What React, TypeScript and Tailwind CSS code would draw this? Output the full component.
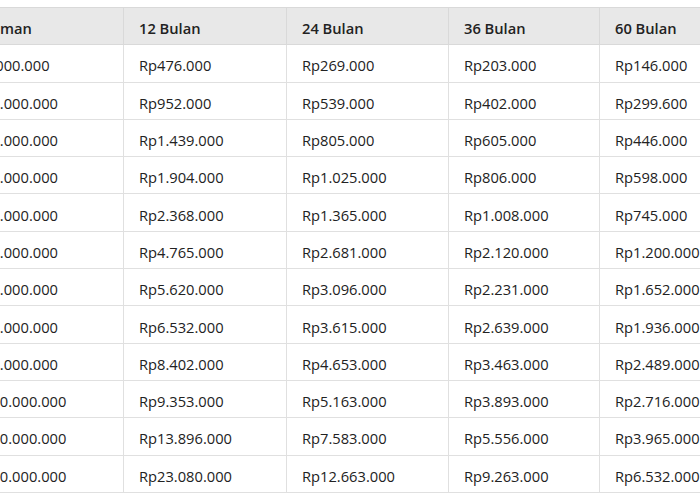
const headers = ["Pinjaman", "12 Bulan", "24 Bulan", "36 Bulan", "60 Bulan"];

const rows: string[][] = [
  ["Rp5.000.000", "Rp476.000", "Rp269.000", "Rp203.000", "Rp146.000"],
  ["Rp10.000.000", "Rp952.000", "Rp539.000", "Rp402.000", "Rp299.600"],
  ["Rp15.000.000", "Rp1.439.000", "Rp805.000", "Rp605.000", "Rp446.000"],
  ["Rp20.000.000", "Rp1.904.000", "Rp1.025.000", "Rp806.000", "Rp598.000"],
  ["Rp25.000.000", "Rp2.368.000", "Rp1.365.000", "Rp1.008.000", "Rp745.000"],
  ["Rp50.000.000", "Rp4.765.000", "Rp2.681.000", "Rp2.120.000", "Rp1.200.000"],
  ["Rp60.000.000", "Rp5.620.000", "Rp3.096.000", "Rp2.231.000", "Rp1.652.000"],
  ["Rp70.000.000", "Rp6.532.000", "Rp3.615.000", "Rp2.639.000", "Rp1.936.000"],
  ["Rp90.000.000", "Rp8.402.000", "Rp4.653.000", "Rp3.463.000", "Rp2.489.000"],
  ["Rp100.000.000", "Rp9.353.000", "Rp5.163.000", "Rp3.893.000", "Rp2.716.000"],
  ["Rp150.000.000", "Rp13.896.000", "Rp7.583.000", "Rp5.556.000", "Rp3.965.000"],
  ["Rp250.000.000", "Rp23.080.000", "Rp12.663.000", "Rp9.263.000", "Rp6.532.000"],
];

export default function App() {
  return (
    <div
      className="w-[700px] h-[500px] overflow-hidden bg-white pt-[7px]"
      style={{ fontFamily: '"Open Sans", "Liberation Sans", sans-serif' }}
    >
      <table className="table-fixed border-collapse ml-[-51px] w-[811px] text-[14.7px] text-[#222]">
        <colgroup>
          <col className="w-[174px]" />
          <col className="w-[163px]" />
          <col className="w-[162px]" />
          <col className="w-[151px]" />
          <col className="w-[161px]" />
        </colgroup>
        <thead>
          <tr className="h-[37.3px] bg-[#e8e8e8]">
            {headers.map((h) => (
              <th
                key={h}
                className="border border-[#d9d9d9] px-[15px] pt-[4px] text-left font-semibold whitespace-nowrap"
              >
                {h}
              </th>
            ))}
          </tr>
        </thead>
        <tbody>
          {rows.map((r, i) => (
            <tr key={i} className="h-[37.3px]">
              {r.map((c, j) => (
                <td
                  key={j}
                  className="border border-[#e0e0e0] px-[15px] pt-[4px] text-left font-normal whitespace-nowrap"
                >
                  {c}
                </td>
              ))}
            </tr>
          ))}
        </tbody>
      </table>
    </div>
  );
}
